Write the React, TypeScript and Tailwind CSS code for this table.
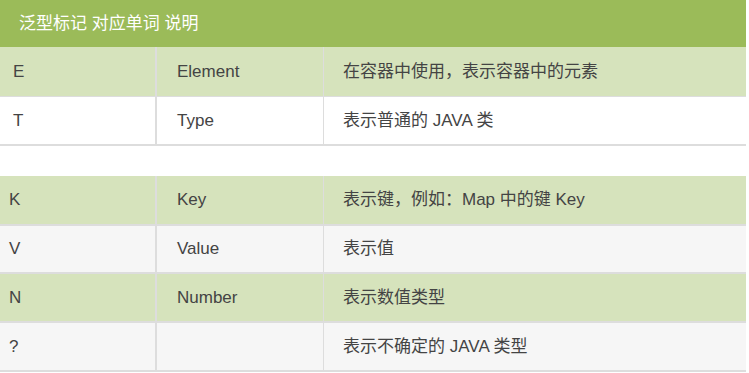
import React from 'react';

type Row = {
  mark: string;
  word: string;
  desc: string;
  bg: string;
  h: string;
  border: string;
};

const firstRows: Row[] = [
  { mark: 'E', word: 'Element', desc: '在容器中使用，表示容器中的元素', bg: 'bg-[#d6e3bc]', h: 'h-[50px]', border: 'border-b' },
  { mark: 'T', word: 'Type', desc: '表示普通的 JAVA 类', bg: 'bg-white', h: 'h-[49px]', border: 'border-b-2' },
];

const secondRows: Row[] = [
  { mark: 'K', word: 'Key', desc: '表示键，例如：Map 中的键 Key', bg: 'bg-[#d6e3bc]', h: 'h-[50px]', border: 'border-b-2' },
  { mark: 'V', word: 'Value', desc: '表示值', bg: 'bg-[#f6f6f6]', h: 'h-[48px]', border: 'border-b-2' },
  { mark: 'N', word: 'Number', desc: '表示数值类型', bg: 'bg-[#d6e3bc]', h: 'h-[49px]', border: 'border-b-2' },
  { mark: '?', word: '', desc: '表示不确定的 JAVA 类型', bg: 'bg-[#f6f6f6]', h: 'h-[49px]', border: 'border-b-2' },
];

const TableRow = ({ row, firstPad }: { row: Row; firstPad: string }) => (
  <div className={`grid grid-cols-[157px_167px_1fr] ${row.h} ${row.bg} ${row.border} border-[#dddddd]`}>
    <div className={`flex items-center border-r-2 border-[#dddddd] ${firstPad}`}>{row.mark}</div>
    <div className="flex items-center border-r border-[#dddddd] pl-[20px]">{row.word}</div>
    <div className="flex items-center pl-[19px]">{row.desc}</div>
  </div>
);

export default function App() {
  return (
    <div
      className="w-[749px] h-[373px] bg-white text-[17px] text-[#444444] overflow-hidden"
      style={{ fontFamily: '"Liberation Sans", "Noto Sans CJK SC", sans-serif' }}
    >
      <div className="w-[746px]">
        <div className="h-[47px] bg-[#9bbb59] text-white flex items-center pl-[19px]">泛型标记 对应单词 说明</div>
        {firstRows.map((r) => (
          <TableRow key={r.mark} row={r} firstPad="pl-[13px]" />
        ))}
        <div className="h-[30px]" />
        {secondRows.map((r) => (
          <TableRow key={r.mark} row={r} firstPad="pl-[9px]" />
        ))}
      </div>
    </div>
  );
}
